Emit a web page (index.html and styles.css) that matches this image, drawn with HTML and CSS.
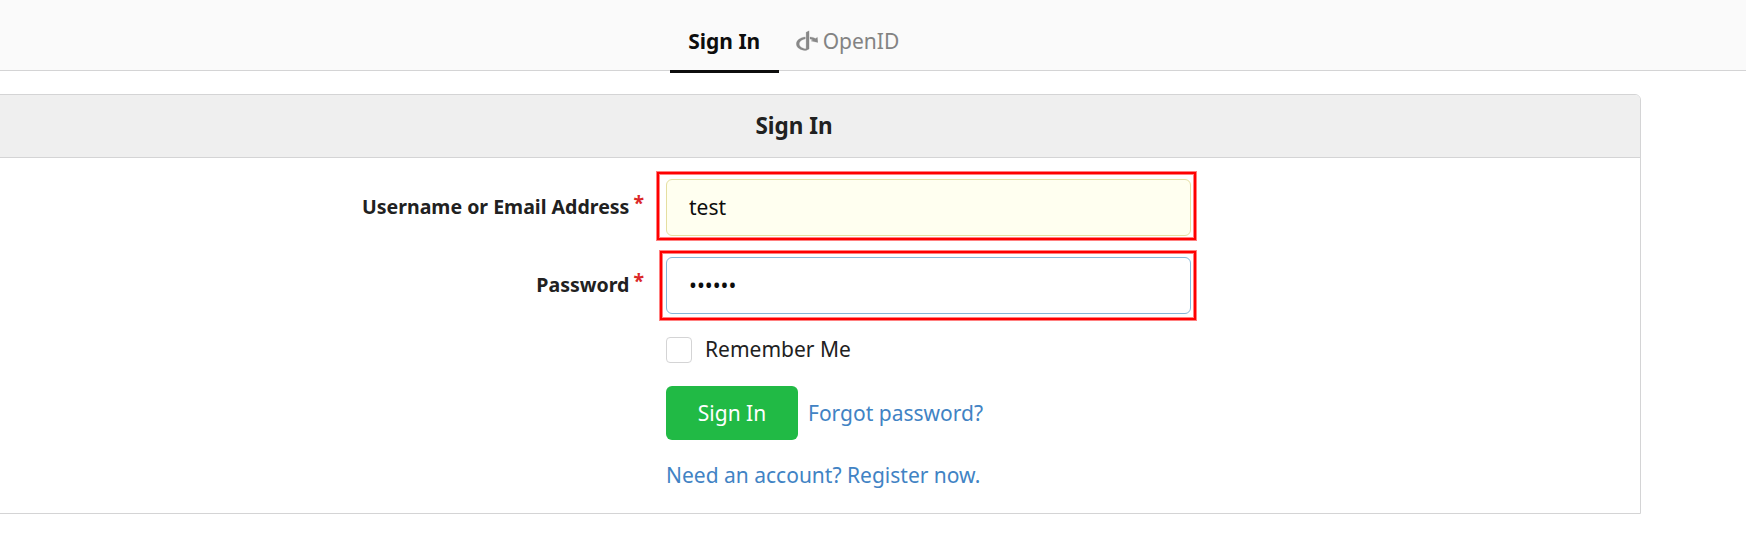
FILE: index.html
```
<!DOCTYPE html>
<html lang="en">
<head>
<meta charset="utf-8">
<title>Sign In</title>
<link rel="stylesheet" href="styles.css">
</head>
<body>
<nav class="tabs">
  <a class="tab active">Sign In</a>
  <a class="tab"><svg class="openid" viewBox="0 0 22 22" width="22" height="22"><path d="M10.1 2.200 13.1.8V18.900L10.1 20.500C4.500 20.200.3 17.700.3 13.900.3 10.300 4.100 7.400 9.300 6.900V8.900C5.700 9.500 3.300 11.300 3.300 13.900 3.300 16.500 6.100 18.300 10.1 18.800Z"/><path d="M14 6.900C16.200 7.100 18.100 7.600 19.600 8.400L21.400 7.300 21.900 12.500 15 11 16.900 9.900C16.100 9.400 15.200 9.100 14 8.900Z"/></svg>OpenID</a>
</nav>
<main class="panel">
  <h4 class="panel-title">Sign In</h4>
  <form class="form">
    <div class="row">
      <label class="label">Username or Email Address<span class="star">*</span></label>
      <div class="field filled"><span class="value">test</span><i class="mark mark-user"></i></div>
    </div>
    <div class="row">
      <label class="label">Password<span class="star">*</span></label>
      <div class="field focused"><span class="value dots">••••••</span><i class="mark mark-pass"></i></div>
    </div>
    <div class="remember"><span class="box"></span><span class="remember-text">Remember Me</span></div>
    <div class="actions"><span class="button">Sign In</span><a class="link">Forgot password?</a></div>
    <div class="register"><a class="link">Need an account? Register now.</a></div>
  </form>
</main>
</body>
</html>
```
FILE: styles.css
```
* { box-sizing: border-box; }
body {
  margin: 0;
  height: 545px;
  overflow: hidden;
  background: #fff;
  color: #212121;
  font: 21px/30px "Noto Sans", sans-serif;
}
.tabs {
  display: flex;
  justify-content: center;
  align-items: flex-end;
  width: 100%;
  height: 71px;
  padding-right: 159px;
  background: #fafafa;
  border-bottom: 1px solid #d4d4d5;
}
.tab {
  display: flex;
  align-items: center;
  height: 60px;
  margin-bottom: -3px;
  padding: 0 18px 1px 17px;
  border-bottom: 3px solid transparent;
  color: #838383;
}
.tab.active {
  justify-content: center;
  width: 109px;
  border-color: #0d0d0d;
  color: #0d0d0d;
  font-weight: 700;
  padding: 0 18px 1px;
}
.openid { margin-right: 5px; fill: #888; stroke: #888; stroke-width: .2; }
.panel {
  width: 1694px;
  height: 420px;
  margin: 23px 0 0 -53px;
  border: 1px solid #d4d4d5;
  border-radius: 6px 6px 0 0;
}
.panel-title {
  height: 63px;
  margin: 0;
  border-bottom: 1px solid #d4d4d5;
  border-radius: 5px 5px 0 0;
  background: #efefef;
  font-size: 22.5px;
  line-height: 62px;
  text-align: center;
}
.form { padding: 21px 0 0 718px; }
.row { display: flex; height: 57px; margin: 0 0 21px -718px; }
.label {
  width: 696px;
  margin-right: 22px;
  font-size: 19.54px;
  font-weight: 700;
  line-height: 56px;
  text-align: right;
}
.star {
  position: relative;
  top: -4px;
  margin-left: 4px;
  color: #db2828;
}
.field {
  position: relative;
  width: 525px;
  padding: 0 22px;
  border: 1px solid #85b7d9;
  border-radius: 6px;
  color: #0d0d0d;
  line-height: 55px;
}
.filled { background: #fffff0; border-color: #e5dfa1; }
.mark {
  position: absolute;
  border: 2px solid #f00;
  box-shadow: 0 0 0 1px #ff8080, inset 0 0 0 1px #ff8080;
}
.mark-user { left: -10px; top: -8px; right: -6px; bottom: -5px; }
.mark-pass { left: -7px; top: -7px; right: -6px; bottom: -7px; }
.remember { display: flex; align-items: center; gap: 13px; height: 26px; margin-top: 23px; }
.remember-text { padding-bottom: 2px; }
.box { width: 26px; height: 26px; border: 1px solid #d4d4d5; border-radius: 4px; }
.actions { display: flex; align-items: center; gap: 10px; height: 54px; margin-top: 23px; }
.button {
  width: 132px;
  height: 54px;
  border-radius: 6px;
  background: #21ba45;
  color: #fff;
  line-height: 54px;
  text-align: center;
}
.link { color: #4183c4; }
.register { margin-top: 20px; }
```
